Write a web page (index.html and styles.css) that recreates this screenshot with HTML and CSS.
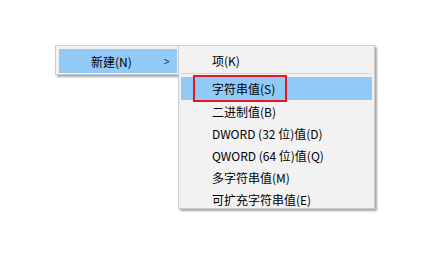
FILE: index.html
```html
<!DOCTYPE html>
<html lang="zh-CN">
<head>
    <meta charset="UTF-8">
    <title>新建菜单</title>
    <link rel="stylesheet" href="styles.css">
</head>
<body>
    <div class="menu main-menu">
        <div class="item active">
            <span class="label">新建(N)</span>
            <span class="arrow">&gt;</span>
        </div>
    </div>

    <div class="menu sub-menu">
        <div class="item">项(K)</div>
        <div class="sep"></div>
        <div class="item active">字符串值(S)</div>
        <div class="item">二进制值(B)</div>
        <div class="item">DWORD (32 位)值(D)</div>
        <div class="item">QWORD (64 位)值(Q)</div>
        <div class="item">多字符串值(M)</div>
        <div class="item">可扩充字符串值(E)</div>
        <div class="mark"></div>
    </div>
</body>
</html>
```

FILE: styles.css
```css
body {
    margin: 0;
    background-color: #ffffff;
    font-family: "Noto Sans CJK SC", "Noto Sans", sans-serif;
    font-size: 12px;
    color: #000000;
    width: 429px;
    height: 256px;
    position: relative;
    overflow: hidden;
}
.menu {
    position: absolute;
    background-color: #f2f2f2;
    border: 1px solid #cccccc;
    box-shadow: 2px 2px 2px rgba(0, 0, 0, 0.35);
    box-sizing: border-box;
}
.main-menu {
    left: 55px;
    top: 45px;
    width: 124px;
    height: 30px;
    padding: 3px 1px 0 3px;
}
.main-menu .item {
    display: flex;
    align-items: center;
    justify-content: space-between;
    height: 24px;
    padding: 0 6px 0 32px;
}
.arrow {
    font-family: "DejaVu Sans", sans-serif;
    font-size: 11px;
    transform: scaleX(0.7);
    color: #333333;
}
.sub-menu {
    left: 178px;
    top: 45px;
    width: 197px;
    height: 164px;
    padding: 3px 2px 0 2px;
}
.sub-menu .item {
    display: flex;
    align-items: center;
    height: 22px;
    padding-left: 31px;
    white-space: nowrap;
}
.item.active {
    background-color: #91c9f7;
}
.sep {
    height: 1px;
    background-color: #d7d7d7;
    margin: 2px 0 3px 0;
}
.sub-menu .item.active {
    height: 23px;
}
.mark {
    position: absolute;
    left: 14px;
    top: 29px;
    width: 94px;
    height: 27px;
    border: 2px solid #e8141e;
    box-sizing: border-box;
}
```
